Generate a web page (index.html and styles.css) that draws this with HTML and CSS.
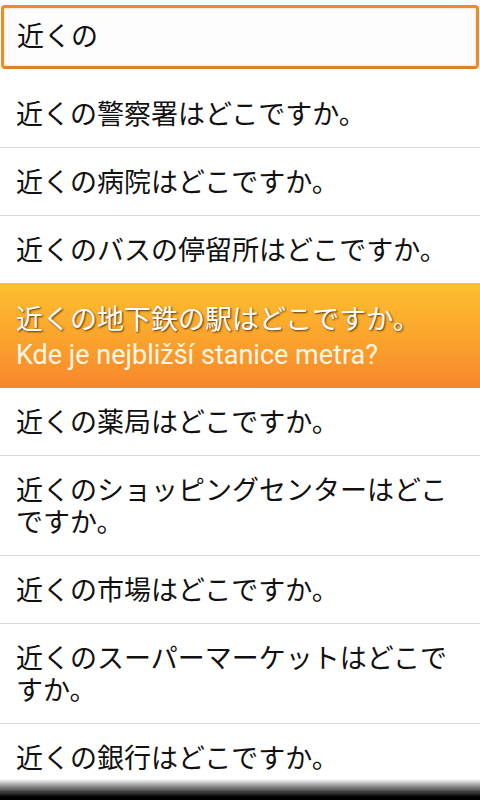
FILE: index.html
```html
<!DOCTYPE html>
<html lang="ja">
<head>
<meta charset="utf-8">
<link rel="stylesheet" href="styles.css">
</head>
<body>
<div class="screen">
  <div class="search-wrap">
    <div class="search">近くの</div>
  </div>
  <ul class="list">
    <li class="row">近くの警察署はどこですか。</li>
    <li class="row">近くの病院はどこですか。</li>
    <li class="row">近くのバスの停留所はどこですか。</li>
    <li class="row active">
      <div class="jp">近くの地下鉄の駅はどこですか。</div>
      <div class="cz">Kde je nejbližší stanice metra?</div>
    </li>
    <li class="row">近くの薬局はどこですか。</li>
    <li class="row">近くのショッピングセンターはどこですか。</li>
    <li class="row">近くの市場はどこですか。</li>
    <li class="row">近くのスーパーマーケットはどこですか。</li>
    <li class="row">近くの銀行はどこですか。</li>
  </ul>
  <div class="fade"></div>
</div>
</body>
</html>
```
FILE: styles.css
```css
html, body {
  margin: 0;
  padding: 0;
  background: #fff;
}
.screen {
  position: relative;
  width: 480px;
  height: 800px;
  overflow: hidden;
  background: #fff;
  font-family: "Noto Sans CJK JP", "DejaVu Sans", sans-serif;
  color: #111;
}
.search-wrap {
  height: 80px;
  padding: 5px 1px 0 1px;
  box-sizing: border-box;
}
.search {
  height: 64px;
  box-sizing: border-box;
  border: 3px solid #e78d2a;
  border-bottom-color: #d9832a;
  border-radius: 4px;
  background: #fdfdfd;
  box-shadow: inset 0 0 3px rgba(200, 120, 30, 0.35);
  padding: 0 0 0 13px;
  font-size: 27px;
  line-height: 54px;
  color: #111;
}
.list {
  list-style: none;
  margin: 0;
  padding: 0;
}
.row {
  padding: 17px 32px 18px 16px;
  font-size: 27px;
  line-height: 32px;
  border-bottom: 1px solid #d9d9d9;
}
.row.active {
  background: linear-gradient(to bottom, #fdc02f 0%, #fba52c 50%, #f7862c 100%);
  border-bottom: none;
  margin-top: -1px;
  padding-top: 19px;
  padding-bottom: 12px;
}
.jp {
  color: #fff;
  text-shadow: 1px 1px 2px rgba(60, 30, 0, 0.85);
}
.cz {
  font-family: Roboto, "Noto Sans", sans-serif;
  font-size: 27px;
  line-height: 42px;
  color: #fff6e6;
}
.fade {
  position: absolute;
  left: 0;
  right: 0;
  bottom: 0;
  height: 21px;
  background: linear-gradient(to bottom, rgba(0,0,0,0) 0%, rgba(0,0,0,0.45) 35%, #000 85%, #000 100%);
}
```
